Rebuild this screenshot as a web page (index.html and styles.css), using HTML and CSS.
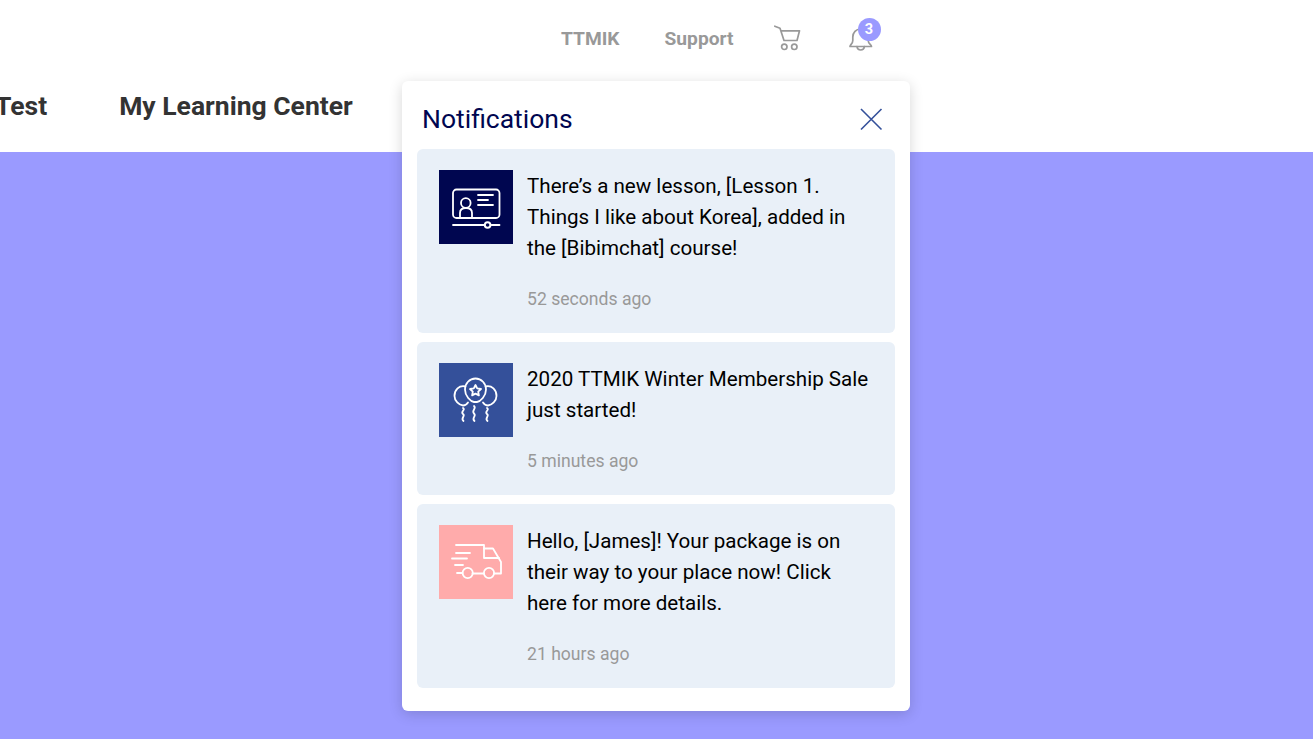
FILE: index.html
```html
<!DOCTYPE html>
<html lang="en">
<head>
<meta charset="utf-8">
<title>Notifications</title>
<link rel="stylesheet" href="styles.css">
</head>
<body>
<header class="header">
  <div class="top-bar">
    <a class="top-link link-ttmik">TTMIK</a>
    <a class="top-link link-support">Support</a>
    <svg class="cart" width="28" height="28" viewBox="0 0 28 28" fill="none" stroke="#999" stroke-width="1.7" stroke-linecap="round" stroke-linejoin="round">
      <path d="M0.8 1.2 L6 3.2 L10 15.5 H23 L25.5 5.8 H7"/>
      <circle cx="10.3" cy="21.8" r="2.7"/>
      <circle cx="20.3" cy="21.8" r="2.7"/>
    </svg>
    <div class="bell-wrap">
      <svg class="bell" width="26" height="26" viewBox="0 0 26 26" fill="none" stroke="#999" stroke-width="1.7" stroke-linecap="round" stroke-linejoin="round">
        <path d="M2 20.5 C2 18.5 4.8 18 4.8 14.5 V11 C4.8 6.5 8 3 12.5 3 C17 3 20.2 6.5 20.2 11 V14.5 C20.2 18 23.5 18.5 23.5 20.5 Z"/>
        <path d="M9 20.7 C9.3 23 11 24 12.7 24 C14.4 24 16.1 23 16.4 20.7"/>
      </svg>
      <span class="badge">3</span>
    </div>
  </div>
  <nav class="tabs">
    <a class="tab">Test</a>
    <a class="tab">My Learning Center</a>
  </nav>
</header>

<main class="backdrop"></main>

<section class="panel">
  <div class="panel-head">
    <h2 class="panel-title">Notifications</h2>
    <svg class="close" width="24" height="24" viewBox="0 0 24 24" fill="none" stroke="#34509a" stroke-width="1.6">
      <path d="M2 2 L22.5 22.5 M22.5 2 L2 22.5"/>
    </svg>
  </div>
  <div class="list">
    <article class="card">
      <div class="thumb thumb-navy">
        <svg width="74" height="74" viewBox="0 0 74 74" fill="none" stroke="#fff" stroke-width="1.8" stroke-linecap="round" stroke-linejoin="round">
          <rect x="14" y="19.5" width="46.5" height="28.5" rx="3.5"/>
          <circle cx="26.8" cy="33" r="4.8"/>
          <path d="M21 48 V43 Q21 38 27 38 Q33 38 33 43 V48"/>
          <path d="M39 25 H54 M39 30 H49 M39 35 H54"/>
          <path d="M14 55 H45 M52.5 55 H60.5"/>
          <circle cx="48.6" cy="55" r="2.8" stroke-width="2"/>
        </svg>
      </div>
      <div class="body">
        <p class="msg">There’s a new lesson, [Lesson 1. Things I like about Korea], added in the [Bibimchat] course!</p>
        <time class="when">52 seconds ago</time>
      </div>
    </article>
    <article class="card">
      <div class="thumb thumb-blue">
        <svg width="74" height="74" viewBox="0 0 74 74" fill="none" stroke="#fff" stroke-width="1.8" stroke-linecap="round" stroke-linejoin="round">
          <path d="M26.5 23.5 C20 22 15.5 27 15.5 33 C15.5 38 20 42 24 42.5 C26 42.5 28 41 29 39.5"/>
          <path d="M46.5 23.5 C53 22 57.5 27 57.5 33 C57.5 38 53 42 49 42.5 C47 42.5 45 41 44 39.5"/>
          <path d="M36.5 15.5 C30.5 15.5 26 20.5 26 26.5 C26 33 31.5 38.5 35 39 H38 C41.5 38.5 47 33 47 26.5 C47 20.5 42.5 15.5 36.5 15.5 Z"/>
          <path d="M36.5 22 L38.2 25.4 L42 26 L39.2 28.6 L39.9 32.4 L36.5 30.6 L33.1 32.4 L33.8 28.6 L31 26 L34.8 25.4 Z"/>
          <path d="M24 45 C27 47 21 48.5 24 51 C27 53 21 55 24.5 58"/>
          <path d="M35 43 C38 45.5 32 47.5 35 50.5 C38 53 32 55 35.5 58"/>
          <path d="M48 45 C51 47 45 48.5 48 51 C51 53 45 55 48.5 58"/>
        </svg>
      </div>
      <div class="body">
        <p class="msg">2020 TTMIK Winter Membership Sale just started!</p>
        <time class="when">5 minutes ago</time>
      </div>
    </article>
    <article class="card">
      <div class="thumb thumb-pink">
        <svg width="74" height="74" viewBox="0 0 74 74" fill="none" stroke="#fff" stroke-width="1.8" stroke-linecap="round" stroke-linejoin="round">
          <path d="M17 20 H45 V33 H60"/>
          <path d="M45 23.5 H54 L62 37 V48.5 H55"/>
          <path d="M17 28 H31 M13 33.5 H28 M16 40 H24 M18 48 H23.5 M33.5 48.5 H45"/>
          <circle cx="28.7" cy="48" r="5.1"/>
          <circle cx="50" cy="48" r="5.1"/>
        </svg>
      </div>
      <div class="body">
        <p class="msg">Hello, [James]! Your package is on their way to your place now! Click here for more details.</p>
        <time class="when">21 hours ago</time>
      </div>
    </article>
  </div>
</section>
</body>
</html>
```
FILE: styles.css
```css
* { box-sizing: border-box; }
html, body { margin: 0; height: 100%; }
body {
  position: relative;
  height: 739px;
  overflow: hidden;
  display: flex;
  flex-direction: column;
  font-family: Roboto, "Liberation Sans", sans-serif;
  background: #9a9aff;
}
.header { height: 152px; background: #fff; }
.top-bar {
  height: 77px;
  display: flex;
  align-items: center;
  padding-left: 561px;
}
.top-link {
  font-size: 19.2px;
  font-weight: 700;
  color: #999;
}
.link-ttmik { margin-right: 45px; }
.link-support { margin-right: 40px; }
.cart { display: block; margin-right: 46px; flex: none; }
.bell-wrap { position: relative; width: 26px; height: 26px; }
.bell { display: block; }
.badge {
  position: absolute;
  left: 10px;
  top: -8px;
  width: 23px;
  height: 23px;
  border-radius: 50%;
  background: #9a9aff;
  color: #fff;
  font-size: 14.5px;
  font-weight: 700;
  line-height: 23px;
  text-align: center;
}
.tabs {
  display: flex;
  gap: 72px;
  margin-left: -5px;
}
.tab {
  font-size: 26.5px;
  font-weight: 700;
  line-height: 57px;
  color: #333;
}
.backdrop { flex: 1; }
.panel {
  position: absolute;
  left: 402px;
  top: 81px;
  width: 508px;
  height: 630px;
  background: #fff;
  border-radius: 6px;
  padding: 0 15px;
  box-shadow: 0 3px 14px rgba(0, 0, 0, 0.16);
}
.panel-head {
  height: 68px;
  padding: 20px 12px 0 5px;
  display: flex;
  justify-content: space-between;
  align-items: flex-start;
}
.panel-title {
  margin: 0;
  font-size: 26.5px;
  font-weight: 400;
  line-height: 35px;
  color: #000650;
}
.close { display: block; margin-top: 6px; }
.list { display: flex; flex-direction: column; gap: 9px; }
.card {
  display: flex;
  gap: 14px;
  padding: 21px 22px 22px;
  background: #e9f0f8;
  border-radius: 6px;
}
.thumb { width: 74px; height: 74px; flex: none; }
.thumb svg { display: block; }
.thumb-navy { background: #000650; }
.thumb-blue { background: #34509a; }
.thumb-pink { background: #ffabab; }
.body { flex: 1; min-width: 0; padding-top: 1px; }
.msg {
  margin: 0;
  font-size: 20.6px;
  line-height: 31px;
  color: #000;
}
.when {
  display: block;
  margin-top: 23px;
  font-size: 17.6px;
  line-height: 24px;
  color: #999;
}
```
